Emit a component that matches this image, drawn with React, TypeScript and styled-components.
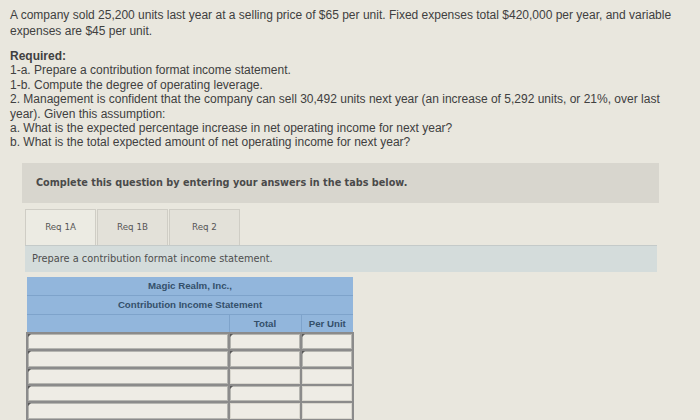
import React from 'react'
import { styled, createGlobalStyle } from 'styled-components'

const GlobalStyle = createGlobalStyle`
  html, body {
    margin: 0;
    padding: 0;
    background: #e9e7de;
  }
  body {
    width: 700px;
    height: 420px;
    overflow: hidden;
  }
`

type Cell = { marked?: boolean }
type Row = [Cell, Cell, Cell]

const rows: Row[] = [
  [{ marked: true }, { marked: true }, { marked: true }],
  [{ marked: true }, { marked: true }, { marked: true }],
  [{ marked: true }, {}, {}],
  [{ marked: true }, { marked: true }, {}],
  [{ marked: true }, {}, {}],
]

const App = () => {
  return (
    <Page>
      <GlobalStyle />
      <Problem>
        <Lines $lh={16}>
          <span>A company sold 25,200 units last year at a selling price of $65 per unit. Fixed expenses total $420,000 per year, and variable</span>
          <span>expenses are $45 per unit.</span>
        </Lines>
        <Lines $lh={14.4}>
          <strong>Required:</strong>
          <span>1-a. Prepare a contribution format income statement.</span>
          <span>1-b. Compute the degree of operating leverage.</span>
          <span>2. Management is confident that the company can sell 30,492 units next year (an increase of 5,292 units, or 21%, over last</span>
          <span>year). Given this assumption:</span>
          <span>a. What is the expected percentage increase in net operating income for next year?</span>
          <span>b. What is the total expected amount of net operating income for next year?</span>
        </Lines>
      </Problem>

      <Banner>Complete this question by entering your answers in the tabs below.</Banner>

      <Tabs>
        <Tab $active>Req 1A</Tab>
        <Tab>Req 1B</Tab>
        <Tab>Req 2</Tab>
      </Tabs>

      <Instruction>Prepare a contribution format income statement.</Instruction>

      <Statement>
        <colgroup>
          <Col $w={202} />
          <Col $w={72} />
          <Col $w={52} />
        </colgroup>
        <thead>
          <tr>
            <TitleCell colSpan={3}>Magic Realm, Inc.,</TitleCell>
          </tr>
          <tr>
            <TitleCell colSpan={3}>Contribution Income Statement</TitleCell>
          </tr>
          <tr>
            <HeadCell />
            <HeadCell>Total</HeadCell>
            <HeadCell>Per Unit</HeadCell>
          </tr>
        </thead>
        <tbody>
          {rows.map((row, i) => (
            <tr key={i}>
              {row.map((c, j) => (
                <DataCell key={j} $marked={c.marked} />
              ))}
            </tr>
          ))}
        </tbody>
      </Statement>
    </Page>
  )
}

const Page = styled.div`
  padding: 7px 0 0 10px;
  font-family: 'Liberation Sans', Arial, sans-serif;
  color: #404040;
`

const Problem = styled.div`
  font-size: 12px;
  display: flex;
  flex-direction: column;
  gap: 10px;
`

const Lines = styled.div<{ $lh: number }>`
  display: flex;
  flex-direction: column;
  white-space: nowrap;
  line-height: ${p => p.$lh}px;
  strong {
    font-weight: bold;
  }
`

const Banner = styled.div`
  margin: 13px 0 0 12px;
  width: 637px;
  height: 40px;
  box-sizing: border-box;
  padding-left: 14px;
  display: flex;
  align-items: center;
  background: #d8d6ce;
  font-family: 'DejaVu Sans', Verdana, sans-serif;
  font-weight: bold;
  font-size: 9.7px;
  color: #4a4a4a;
`

const Tabs = styled.div`
  display: flex;
  margin: 6px 0 0 15px;
  height: 36px;
`

const Tab = styled.div<{ $active?: boolean }>`
  width: 71px;
  box-sizing: border-box;
  display: flex;
  align-items: center;
  justify-content: center;
  border: 1px solid #cfcdc5;
  border-bottom: none;
  background: ${p => (p.$active ? '#ecebe3' : '#e3e1d9')};
  font-family: 'DejaVu Sans', Verdana, sans-serif;
  font-size: 8.7px;
  color: #555;
  & + & {
    margin-left: 1px;
  }
`

const Instruction = styled.div`
  margin-left: 15px;
  width: 632px;
  height: 27px;
  box-sizing: border-box;
  padding-left: 7px;
  display: flex;
  align-items: center;
  background: #d4dcdb;
  border-top: 1px solid #c4cac9;
  font-family: 'DejaVu Sans', Verdana, sans-serif;
  font-size: 9.8px;
  color: #4e4e4e;
`

const Statement = styled.table`
  margin: 5px 0 0 16px;
  width: 326px;
  border-collapse: collapse;
  table-layout: fixed;
  font-family: 'Liberation Sans', Arial, sans-serif;
  font-weight: bold;
  font-size: 9.7px;
  color: #34506b;
`

const Col = styled.col<{ $w: number }>`
  width: ${p => p.$w}px;
`

const TitleCell = styled.th`
  height: 18px;
  padding: 0;
  background: #92b6dc;
  border-bottom: 1px solid #7ea3cb;
  text-align: center;
`

const HeadCell = styled.th`
  height: 17px;
  padding: 0;
  background: #92b6dc;
  border-left: 1px solid #7ea3cb;
  text-align: center;
  &:first-child {
    border-left: none;
  }
`

const DataCell = styled.td<{ $marked?: boolean }>`
  position: relative;
  height: 15.4px;
  padding: 0;
  background: #eeece5;
  border: 2px solid #8b8b8b;
  box-shadow: inset 0 0 0 1px ${p => (p.$marked ? '#b5b5b0' : '#d8d6ce')};
  &::before {
    content: '';
    display: ${p => (p.$marked ? 'block' : 'none')};
    position: absolute;
    left: 0;
    top: 0;
    border-top: 3px solid #5a5a5a;
    border-right: 3px solid transparent;
  }
`

export default App
